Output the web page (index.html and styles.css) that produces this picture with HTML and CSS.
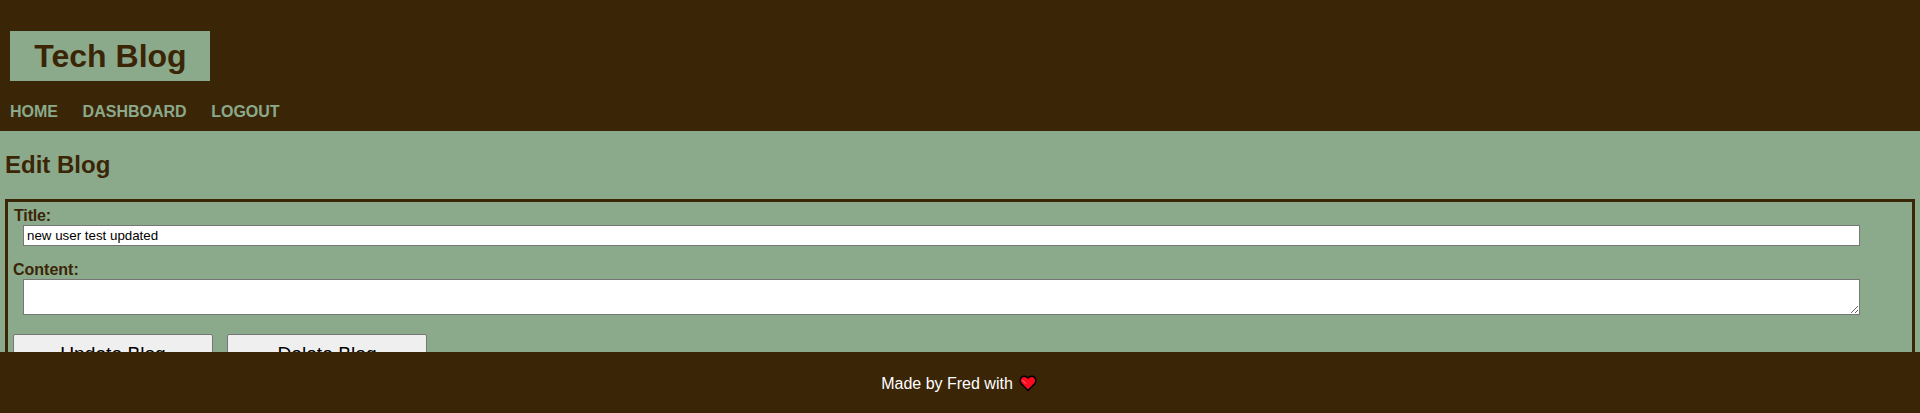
FILE: index.html
```html
<!DOCTYPE html>
<html lang="en">
<head>
<meta charset="utf-8">
<title>Tech Blog</title>
<link rel="stylesheet" href="styles.css">
</head>
<body>
<header class="site-header">
  <h1 class="brand">Tech Blog</h1>
  <nav class="nav">
    <a class="nav-link">HOME</a>
    <a class="nav-link">DASHBOARD</a>
    <a class="nav-link">LOGOUT</a>
  </nav>
</header>
<main class="content">
  <h2 class="page-title">Edit Blog</h2>
  <form class="edit-form">
    <label class="label label-title" for="title">Title:</label>
    <input class="field field-title" id="title" type="text" value="new user test updated">
    <label class="label" for="body">Content:</label>
    <textarea class="field field-body" id="body"></textarea>
    <div class="actions">
      <button class="button" type="button">Update Blog</button>
      <button class="button" type="button">Delete Blog</button>
    </div>
  </form>
</main>
<footer class="site-footer">
  <span>Made by Fred with</span>
  <svg class="heart" width="18" height="17" viewBox="0 0 18 17">
    <path d="M9 15.5 L2.2 8.6 C.2 5.8 1.2 1.4 5 1.2 C6.8 1.1 8.2 2 9 3.2 C9.8 2 11.2 1.1 13 1.2 C16.8 1.4 17.8 5.8 15.8 8.6 Z" fill="#fb0a20" stroke="#000" stroke-width="1.5" stroke-linejoin="round"/>
    <path d="M3.8 5.4 L6.8 8.4" stroke="#ff7880" stroke-width="1" stroke-linecap="round"/>
  </svg>
</footer>
</body>
</html>
```
FILE: styles.css
```css
* { box-sizing: border-box; }
body {
  margin: 0;
  height: 413px;
  display: flex;
  flex-direction: column;
  overflow: hidden;
  background: #8baa8b;
  color: #3b2507;
  font-family: Arial, "Liberation Sans", sans-serif;
  font-size: 16px;
}
.site-header {
  flex: none;
  height: 131px;
  padding: 31px 10px 0;
  background: #3b2507;
}
.brand {
  margin: 0;
  padding-left: 1px;
  width: 200px;
  height: 50px;
  background: #8baa8b;
  font-size: 32px;
  line-height: 50px;
  text-align: center;
}
.nav {
  display: flex;
  gap: 24.6px;
  margin-top: 22px;
  line-height: 18px;
}
.nav-link { color: #8baa8b; font-weight: bold; }
.content {
  flex: 1;
  min-height: 0;
  overflow: hidden;
  padding: 20px 5px 0;
}
.page-title {
  margin: 0 0 20px;
  font-size: 24px;
  line-height: 28px;
}
.edit-form {
  display: flex;
  flex-direction: column;
  height: 220px;
  padding: 5px;
  border: 3px solid #3b2507;
}
.label { font-weight: bold; line-height: 18px; }
.label-title { padding-left: 1px; letter-spacing: -0.15px; }
.field {
  width: 1837px;
  margin: 0 0 0 10px;
  border: 1px solid #767676;
  background: #fff;
  color: #000;
  font-family: Arial, "Liberation Sans", sans-serif;
  font-size: 13.333px;
}
.field-title {
  height: 21px;
  margin-bottom: 15px;
  padding: 1px 3px;
}
.field-body { height: 36px; padding: 2px; }
.actions { display: flex; gap: 14px; margin-top: 19px; }
.button {
  width: 200px;
  height: 40px;
  padding: 0;
  border: 1px solid #767676;
  border-radius: 2px;
  background: #efefef;
  color: #000;
  font-family: Arial, "Liberation Sans", sans-serif;
  font-size: 19.2px;
}
.site-footer {
  flex: none;
  display: flex;
  justify-content: center;
  gap: 6px;
  height: 61px;
  padding-top: 22px;
  padding-right: 2px;
  background: #3b2507;
  color: #fff;
  line-height: 18px;
}
.site-footer span { padding-top: 1px; }
.heart { display: block; margin-top: 1px; }
```
